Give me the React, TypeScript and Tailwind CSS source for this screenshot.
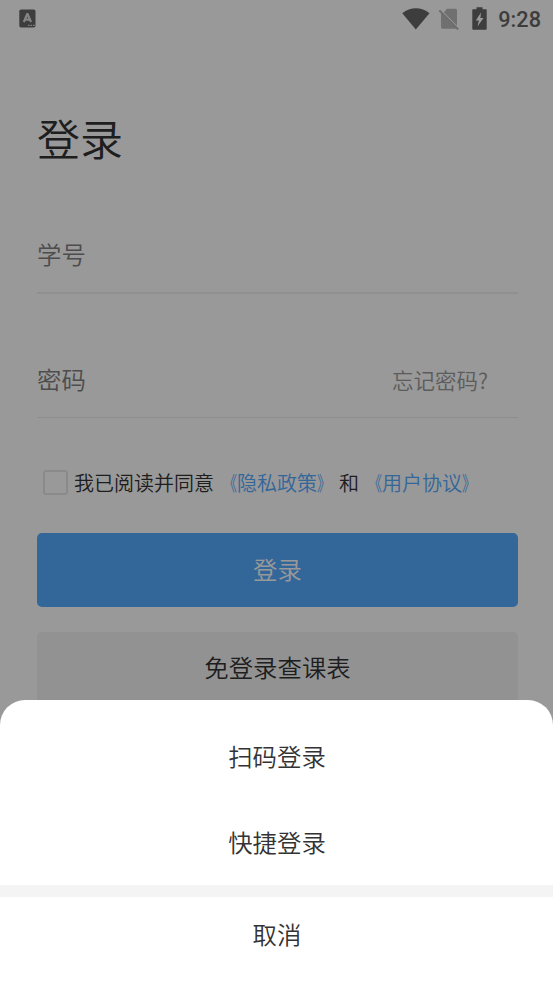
import type { ReactNode } from 'react';

function StatusBar() {
  return (
    <header className="flex h-[37px] items-center justify-between pl-[19px] pr-3">
      <svg width="17" height="19" viewBox="0 0 17 19" className="-mt-px">
        <rect x="0.3" y="0.5" width="16.2" height="18" rx="1.8" fill="#666" />
        <path d="M4.8 13 8.2 5.2h.4L12 13M6 10.6h4.8" fill="none" stroke="#ddd" strokeWidth="2.2" />
        <path d="M9 16.4h1.6M11.5 16.4h1.6M14 16.4h1.6" stroke="#ddd" strokeWidth="1.1" />
      </svg>
      <div className="flex items-center">
        <svg width="28" height="23" viewBox="0 0 28 23" className="mr-[9px]" fill="#666">
          <path d="M0.3 6.2C8.3 -0.5 19.5 -0.5 27.5 6.2L13.8 22.5Z" />
        </svg>
        <svg width="21" height="22" viewBox="0 0 21 22" className="mr-[12px]">
          <path d="M8 0.8h8.3c1 0 1.7.7 1.7 1.7v15.2L4.8 4.2Z" fill="#bbb" />
          <path d="M2 4.8 17.6 20.4q-.5.4-1.2.4H3.7c-1 0-1.7-.7-1.7-1.7Z" fill="#bbb" />
          <path d="M0.4 2.4 19.2 21.4" stroke="#b5b5b5" strokeWidth="2" />
        </svg>
        <svg width="15" height="23" viewBox="0 0 15 23" className="mr-[11px]">
          <path d="M4.5 0.3h6v2H14q.7 0 .7.7v19q0 .7-.7.7H1q-.7 0-.7-.7V3q0-.7.7-.7h3.5Z" fill="#666" />
          <path d="M9 5.4 3.8 13.5h3.1l-1.4 6.1 6-8.6H8.4Z" fill="#fff" />
        </svg>
        <span className="pt-0.5 font-['Roboto'] text-[21.7px] font-medium leading-6 text-[#666]">9:28</span>
      </div>
    </header>
  );
}

function Field({ label, children }: { label: string; children?: ReactNode }) {
  return (
    <div className="flex h-[74px] items-center justify-between pr-[30px] text-[24.4px] text-[#808080]">
      <span className="pb-0.5">{label}</span>
      {children}
    </div>
  );
}

function AgreementLink({ name }: { name: string }) {
  return (
    <a className="ml-[3px] flex text-[#55abff]">
      <span className="origin-right scale-x-[0.7]">《</span>
      <span>{name}</span>
      <span className="origin-left scale-x-[0.7]">》</span>
    </a>
  );
}

function LoginPage() {
  return (
    <div className="h-full bg-white">
      <StatusBar />
      <main className="pl-[37px] pr-[35px] pt-[68px]">
        <h1 className="h-16 text-[43px] leading-16 text-[#333]">登录</h1>
        <div className="mt-[49px] border-b-2 border-[#f0f0f0]">
          <Field label="学号" />
        </div>
        <div className="mt-[49px] border-b border-[#ebebeb]">
          <Field label="密码">
            <a className="pt-px text-[21.5px] text-[#999]">忘记密码?</a>
          </Field>
        </div>
        <div className="mt-[52px] flex h-[25px] items-center whitespace-nowrap pl-1.5 text-[20px] text-[#333]">
          <span className="mr-1.5 size-[25px] rounded-[3px] border-2 border-[#e6e6e6]" />
          <span>我已阅读并同意</span>
          <AgreementLink name="隐私政策" />
          <span className="ml-[2px]">和</span>
          <AgreementLink name="用户协议" />
        </div>
        <button className="mt-[38px] block h-[74px] w-full rounded-[5px] bg-[#55abff] pb-0.5 text-[24.4px] text-white">
          登录
        </button>
        <button className="mt-[25px] block h-[74px] w-full rounded-[5px] bg-[#f3f3f3] pb-[3px] text-[24.4px] text-[#333]">
          免登录查课表
        </button>
      </main>
    </div>
  );
}

function ActionSheet() {
  return (
    <div className="absolute inset-x-0 bottom-0 flex h-[283px] flex-col rounded-t-[25px] bg-white pt-[14px] text-[24.4px] text-[#333]">
      <button className="h-[86px] pb-0.5 pl-px">扫码登录</button>
      <button className="h-[85px] pl-px">快捷登录</button>
      <div className="h-3 bg-[#f4f4f4]" />
      <button className="h-[76px] pb-px pl-px">取消</button>
    </div>
  );
}

export default function App() {
  return (
    <div className="relative h-[983px] w-full overflow-hidden font-['Noto_Sans_CJK_SC',sans-serif] [font-weight:350]">
      <LoginPage />
      <div className="absolute inset-0 bg-black/40" />
      <ActionSheet />
    </div>
  );
}
